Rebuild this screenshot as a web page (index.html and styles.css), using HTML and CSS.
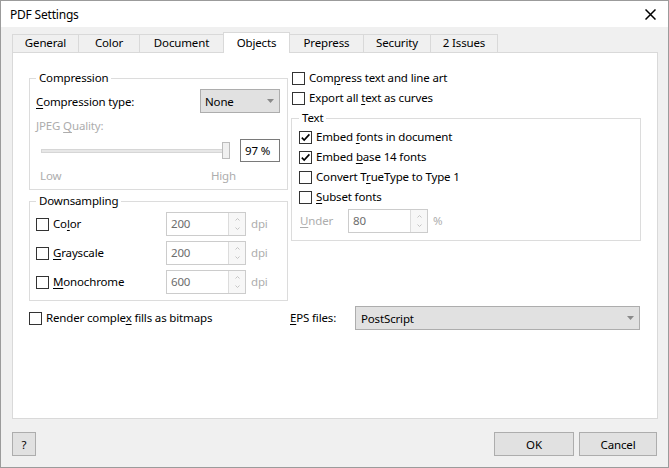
FILE: index.html
```html
<!DOCTYPE html>
<html>
<head>
<meta charset="utf-8">
<title>PDF Settings</title>
<link rel="stylesheet" href="styles.css">
</head>
<body>
<div class="window">
  <div class="titlebar">
    <span class="title">PDF Settings</span>
    <svg class="close" width="11" height="11" viewBox="0 0 11 11"><path d="M0.5 0.5 L10.5 10.5 M10.5 0.5 L0.5 10.5" stroke="#000" stroke-width="1.5"/></svg>
  </div>
  <div class="body">
    <div class="tabs">
      <div class="tab t-general">General</div>
      <div class="tab t-color">Color</div>
      <div class="tab t-document">Document</div>
      <div class="tab t-objects active">Objects</div>
      <div class="tab t-prepress">Prepress</div>
      <div class="tab t-security">Security</div>
      <div class="tab t-issues">2 Issues</div>
    </div>
    <div class="panel">
      <div class="col-left">
        <div class="group g-compression">
          <span class="group-title">Compression</span>
          <div class="combo-row">
            <span><u>C</u>ompression type:</span>
            <div class="combo c-small"><span>None</span><svg class="arrow" width="7" height="4" viewBox="0 0 7 4"><path d="M0 0 H7 L3.5 4 Z" fill="#8a8a8a"/></svg></div>
          </div>
          <div class="line disabled jpeg">JPEG <u>Q</u>uality:</div>
          <div class="slider-row">
            <div class="slider"><div class="track"></div><div class="thumb"></div></div>
            <div class="textbox">97 %</div>
          </div>
          <div class="line disabled lowhigh"><span class="low">Low</span><span class="high">High</span></div>
        </div>

        <div class="group g-downsampling">
          <span class="group-title">Downsampling</span>
          <div class="ds-row">
            <div class="ds-label"><span class="cb"></span><span>Co<u>l</u>or</span></div>
            <div class="spin"><span class="spin-value">200</span><span class="spin-btns"><svg width="5" height="3" viewBox="0 0 5 3"><path d="M0.5 2.5 L2.5 0.5 L4.5 2.5" stroke="#c4c4c4" fill="none"/></svg><svg width="5" height="3" viewBox="0 0 5 3"><path d="M0.5 0.5 L2.5 2.5 L4.5 0.5" stroke="#c4c4c4" fill="none"/></svg></span></div>
            <span class="unit disabled">dpi</span>
          </div>
          <div class="ds-row">
            <div class="ds-label"><span class="cb"></span><span><u>G</u>rayscale</span></div>
            <div class="spin"><span class="spin-value">200</span><span class="spin-btns"><svg width="5" height="3" viewBox="0 0 5 3"><path d="M0.5 2.5 L2.5 0.5 L4.5 2.5" stroke="#c4c4c4" fill="none"/></svg><svg width="5" height="3" viewBox="0 0 5 3"><path d="M0.5 0.5 L2.5 2.5 L4.5 0.5" stroke="#c4c4c4" fill="none"/></svg></span></div>
            <span class="unit disabled">dpi</span>
          </div>
          <div class="ds-row">
            <div class="ds-label"><span class="cb"></span><span><u>M</u>onochrome</span></div>
            <div class="spin"><span class="spin-value">600</span><span class="spin-btns"><svg width="5" height="3" viewBox="0 0 5 3"><path d="M0.5 2.5 L2.5 0.5 L4.5 2.5" stroke="#c4c4c4" fill="none"/></svg><svg width="5" height="3" viewBox="0 0 5 3"><path d="M0.5 0.5 L2.5 2.5 L4.5 0.5" stroke="#c4c4c4" fill="none"/></svg></span></div>
            <span class="unit disabled">dpi</span>
          </div>
        </div>

        <div class="cb-row render-row"><span class="cb"></span><span>Render comple<u>x</u> fills as bitmaps</span></div>
      </div>

      <div class="col-right">
        <div class="cb-row r-indent"><span class="cb"></span><span>Com<u>p</u>ress text and line art</span></div>
        <div class="cb-row r-indent r-gap"><span class="cb"></span><span>Export all <u>t</u>ext as curves</span></div>

        <div class="group g-text">
          <span class="group-title">Text</span>
          <div class="cb-row"><span class="cb checked"><svg width="11" height="11" viewBox="0 0 11 11"><path d="M1.8 5.6 L4.2 8 L9.4 2.4" stroke="#000" stroke-width="1.6" fill="none"/></svg></span><span>Embed <u>f</u>onts in document</span></div>
          <div class="cb-row r-gap"><span class="cb checked"><svg width="11" height="11" viewBox="0 0 11 11"><path d="M1.8 5.6 L4.2 8 L9.4 2.4" stroke="#000" stroke-width="1.6" fill="none"/></svg></span><span>Embed <u>b</u>ase 14 fonts</span></div>
          <div class="cb-row r-gap"><span class="cb"></span><span>Convert T<u>r</u>ueType to Type 1</span></div>
          <div class="cb-row r-gap"><span class="cb"></span><span><u>S</u>ubset fonts</span></div>
          <div class="under-row">
            <span class="under-label disabled"><u>U</u>nder</span>
            <div class="spin"><span class="spin-value">80</span><span class="spin-btns"><svg width="5" height="3" viewBox="0 0 5 3"><path d="M0.5 2.5 L2.5 0.5 L4.5 2.5" stroke="#c4c4c4" fill="none"/></svg><svg width="5" height="3" viewBox="0 0 5 3"><path d="M0.5 0.5 L2.5 2.5 L4.5 0.5" stroke="#c4c4c4" fill="none"/></svg></span></div>
            <span class="unit disabled">%</span>
          </div>
        </div>

        <div class="eps-row">
          <span class="eps-label"><u>E</u>PS files:</span>
          <div class="combo c-wide"><span>PostScript</span><svg class="arrow" width="7" height="4" viewBox="0 0 7 4"><path d="M0 0 H7 L3.5 4 Z" fill="#8a8a8a"/></svg></div>
        </div>
      </div>
    </div>

    <div class="footer">
      <button class="btn btn-help">?</button>
      <button class="btn btn-ok">OK</button>
      <button class="btn btn-cancel">Cancel</button>
    </div>
  </div>
</div>
</body>
</html>
```

FILE: styles.css
```css
* { box-sizing: border-box; }
html, body { margin: 0; padding: 0; }
body {
  font-family: "Noto Sans", "Open Sans", sans-serif;
  font-size: 11.5px;
  letter-spacing: -0.15px;
  color: #000;
  background: #fff;
}
u { text-decoration: underline; text-underline-offset: 2px; }

.window {
  width: 669px;
  height: 468px;
  border: 1px solid #9b9b9b;
  background: #f0f0f0;
  display: flex;
  flex-direction: column;
}

.titlebar {
  height: 26px;
  flex: none;
  background: #fff;
  display: flex;
  align-items: center;
  justify-content: space-between;
  padding: 1px 12px 0 9px;
}
.title { line-height: 16px; font-size: 12px; letter-spacing: -0.2px; }
.close { display: block; margin-top: -1px; }

.body {
  flex: 1;
  display: flex;
  flex-direction: column;
  padding: 5px 10px 0 11px;
}

.tabs {
  display: flex;
  align-items: flex-end;
  height: 20px;
  flex: none;
}
.tab {
  height: 18px;
  border: 1px solid #d9d9d9;
  border-bottom: none;
  margin-right: -1px;
  background: #f0f0f0;
  text-align: center;
  line-height: 16px;
}
.tab.active {
  height: 21px;
  background: #fff;
  margin-bottom: -1px;
  position: relative;
  z-index: 1;
  padding-top: 2px;
}
.t-general { width: 67px; }
.t-color { width: 62px; }
.t-document { width: 85px; }
.t-objects { width: 67px; }
.t-prepress { width: 75px; }
.t-security { width: 68px; }
.t-issues { width: 68px; }

.panel {
  width: 646px;
  height: 367px;
  flex: none;
  border: 1px solid #d9d9d9;
  background: #fff;
  display: grid;
  grid-template-columns: 259px 351px;
  column-gap: 2px;
  align-content: start;
  align-items: start;
  padding: 17px 0 0 16px;
}

.disabled { color: #adadad; }
.line { line-height: 16px; height: 16px; }

/* group boxes */
.group {
  border: 1px solid #dcdcdc;
  position: relative;
}
.group-title {
  position: absolute;
  top: -9px;
  left: 6px;
  padding: 0 3px;
  background: #fff;
  line-height: 16px;
}

.g-compression {
  margin-top: 8px;
  height: 112px;
  padding: 10px 7px 0 6px;
}
.combo-row {
  display: flex;
  align-items: center;
  justify-content: space-between;
  height: 24px;
}
.combo {
  height: 24px;
  background: #e1e1e1;
  border: 1px solid #adadad;
  display: flex;
  align-items: center;
  justify-content: space-between;
  padding: 0 5px 0 4px;
}
.combo .arrow { display: block; }
.c-small { width: 80px; }
.c-wide { width: 285px; padding-left: 5px; }

.jpeg { margin-top: 5px; }
.slider-row {
  margin-top: 5px;
  height: 23px;
  display: flex;
  align-items: center;
}
.slider {
  position: relative;
  margin-left: 5px;
  width: 189px;
  height: 17px;
  display: flex;
  align-items: center;
}
.track {
  width: 100%;
  height: 4px;
  background: #e7e7e7;
  border: 1px solid #d6d6d6;
}
.thumb {
  position: absolute;
  right: 0;
  top: 0;
  width: 8px;
  height: 17px;
  background: #f0f0f0;
  border: 1px solid #bcbcbc;
}
.textbox {
  margin-left: 10px;
  width: 40px;
  height: 23px;
  border: 1px solid #7a7a7a;
  padding-left: 4px;
  line-height: 21px;
}
.lowhigh {
  margin-top: 6px;
  display: flex;
}
.low { margin-left: 4px; }
.high { margin-left: auto; margin-right: 44px; }

.g-downsampling {
  margin-top: 11px;
  height: 100px;
  padding: 10px 7px 0 6px;
}
.ds-row {
  display: flex;
  align-items: center;
  height: 24px;
}
.ds-row + .ds-row { margin-top: 5px; }
.ds-label {
  width: 130px;
  display: flex;
  align-items: center;
  line-height: 16px;
}

.spin {
  width: 80px;
  height: 24px;
  border: 1px solid #cccccc;
  display: flex;
  flex: none;
}
.spin-value {
  flex: 1;
  color: #6d6d6d;
  padding-left: 4px;
  line-height: 22px;
}
.spin-btns {
  width: 17px;
  border-left: 1px solid #dcdcdc;
  background: #f7f7f7;
  display: flex;
  flex-direction: column;
  align-items: center;
  justify-content: center;
  gap: 6px;
}
.spin-btns svg { display: block; }
.unit { margin-left: 5px; line-height: 16px; }

/* checkboxes */
.cb {
  width: 13px;
  height: 13px;
  flex: none;
  border: 1px solid #333;
  background: #fff;
  margin-right: 4px;
  display: flex;
  align-items: center;
  justify-content: center;
}
.cb svg { display: block; }
.cb-row {
  display: flex;
  align-items: center;
  height: 16px;
  line-height: 16px;
}
.render-row { margin-top: 9px; }
.r-indent { margin-left: 2px; }
.r-gap { margin-top: 4px; }

.g-text {
  margin-top: 12px;
  margin-left: 1px;
  width: 350px;
  height: 123px;
  padding: 10px 0 0 7px;
}
.g-text .group-title { left: 7px; }
.under-row {
  margin-top: 4px;
  height: 24px;
  display: flex;
  align-items: center;
}
.under-label { width: 49px; padding-left: 1px; line-height: 16px; }

.eps-row {
  margin-top: 65px;
  height: 24px;
  display: flex;
  align-items: center;
}
.eps-label { width: 65px; line-height: 16px; }

/* footer */
.footer {
  margin-top: 13px;
  height: 24px;
  display: flex;
  flex: none;
}
.btn {
  height: 24px;
  background: #e1e1e1;
  border: 1px solid #adadad;
  font-family: inherit;
  font-size: 11.5px;
  letter-spacing: -0.15px;
  color: #000;
  padding: 0;
  margin: 0;
}
.btn-help { width: 24px; }
.btn-ok { width: 80px; margin-left: auto; }
.btn-cancel { width: 78px; margin-left: 5px; margin-right: 1px; }
```
